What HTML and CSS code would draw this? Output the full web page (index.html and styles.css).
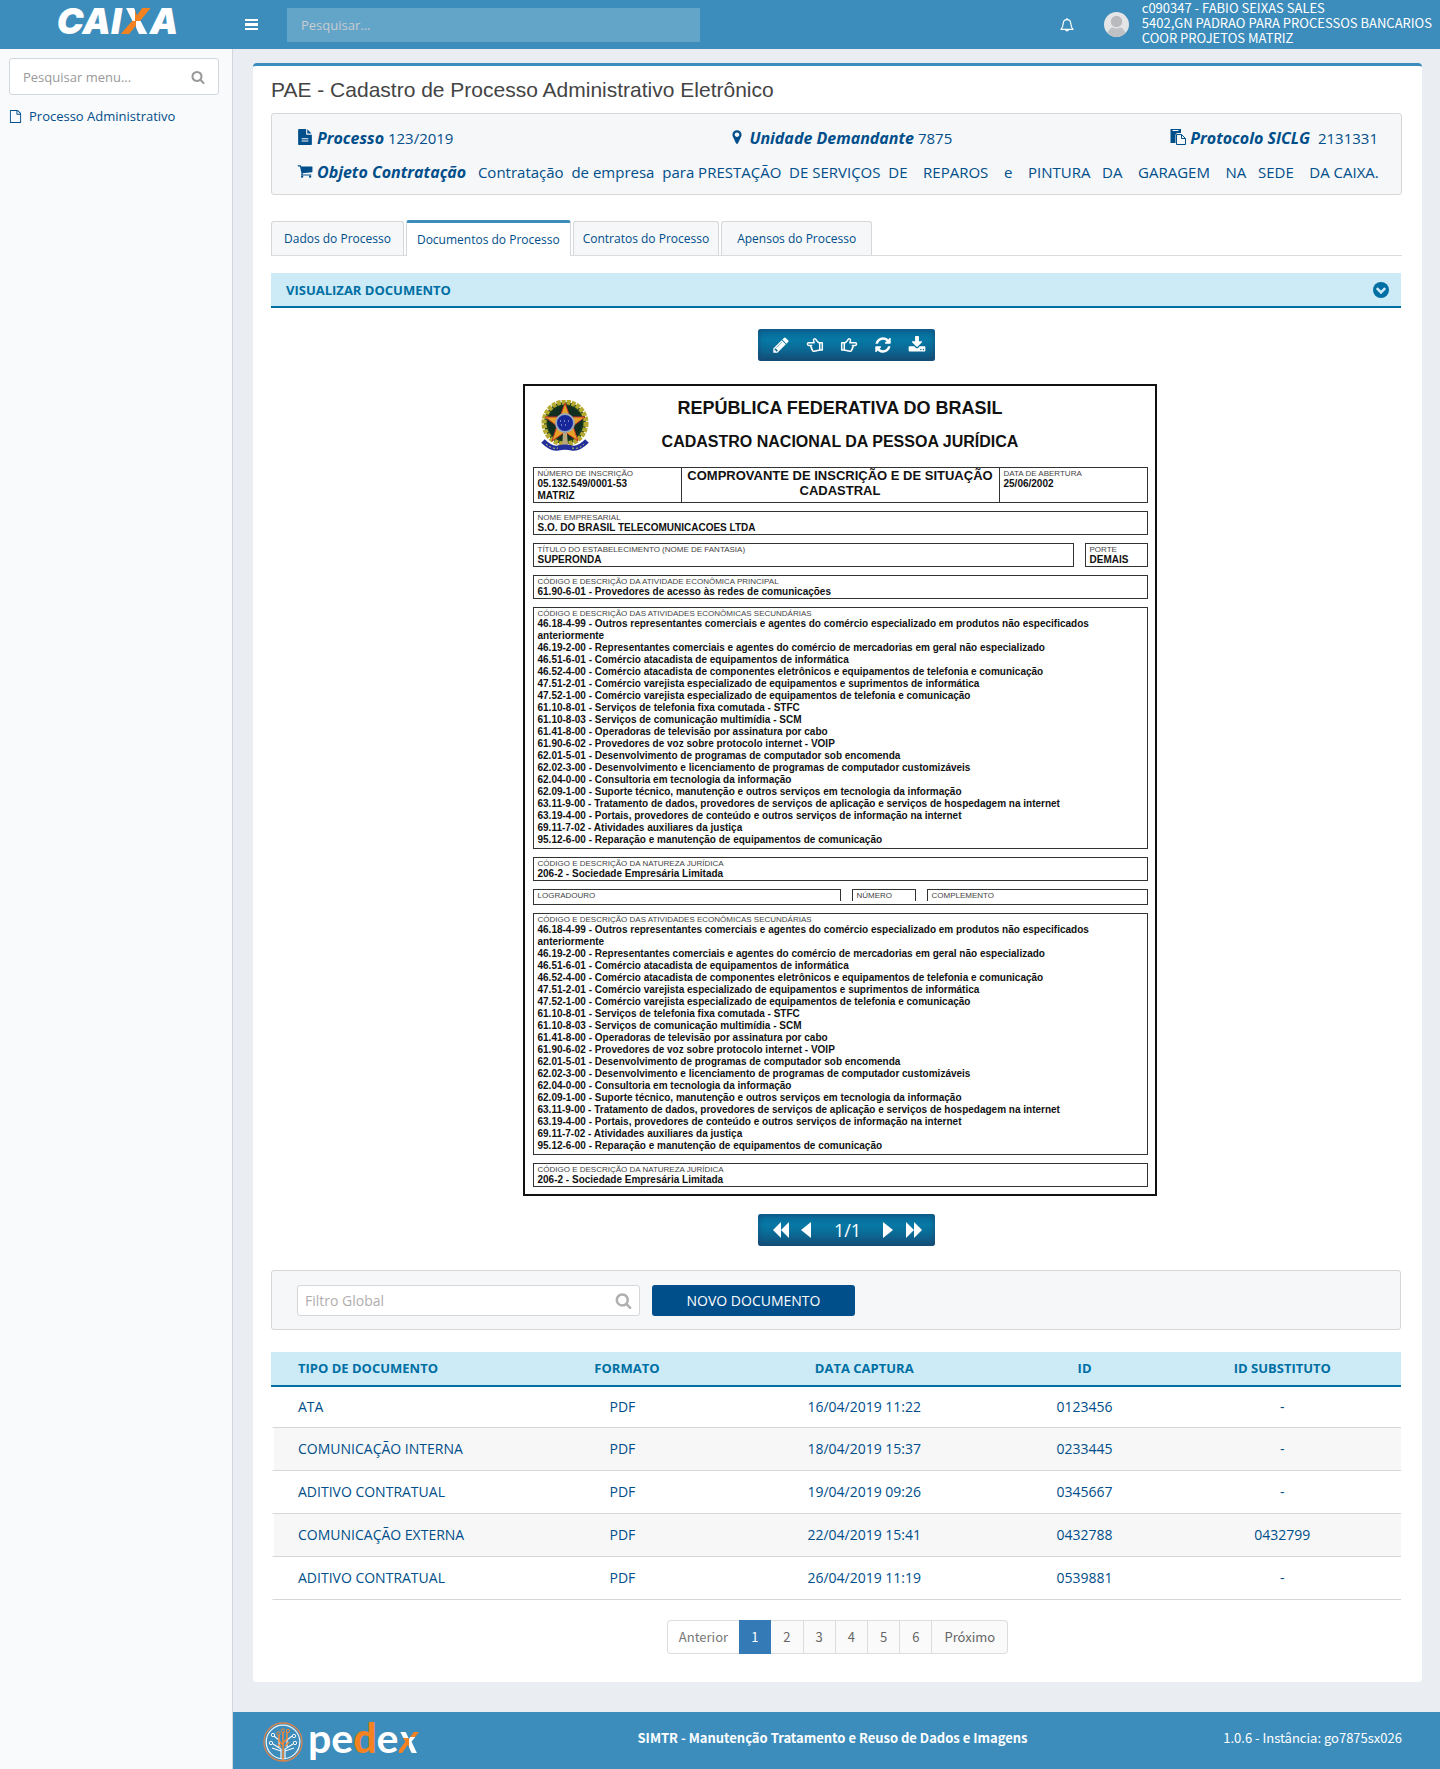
FILE: index.html
```html
<!DOCTYPE html>
<html lang="pt-BR">
<head>
<meta charset="utf-8">
<meta name="viewport" content="width=device-width, initial-scale=1">
<title>PAE - Cadastro de Processo Administrativo Eletrônico</title>
<link rel="stylesheet" href="styles.css">
</head>
<body>
<svg class="sprite" aria-hidden="true">
  <symbol id="search" viewBox="0 0 1792 1792"><path d="M1216 832q0-185-131.500-316.500t-316.500-131.500-316.500 131.500-131.500 316.500 131.500 316.500 316.500 131.500 316.500-131.500 131.500-316.500zm512 832q0 52-38 90t-90 38q-54 0-90-38l-343-342q-179 124-399 124-143 0-273.500-55.500t-225-150-150-225-55.500-273.500 55.500-273.500 150-225 225-150 273.500-55.500 273.500 55.500 225 150 150 225 55.500 273.500q0 220-124 399l343 343q37 37 37 90z"/></symbol>
  <symbol id="file" viewBox="0 0 1792 1792"><path d="M1596 380q28 28 48 76t20 88v1152q0 40-28 68t-68 28h-1344q-40 0-68-28t-28-68v-1600q0-40 28-68t68-28h896q40 0 88 20t76 48zm-444-244v376h376q-10-29-22-41l-313-313q-12-12-41-22zm384 1528v-1024h-416q-40 0-68-28t-28-68v-416h-768v1536h1280z"/></symbol>
  <symbol id="file-text" viewBox="0 0 1792 1792"><path d="M1596 476q14 14 28 36h-472v-472q22 14 36 28zm-476 164h544v1056q0 40-28 68t-68 28h-1344q-40 0-68-28t-28-68v-1600q0-40 28-68t68-28h800v544q0 40 28 68t68 28zm160 736v-64q0-32-32-32h-704q-32 0-32 32v64q0 32 32 32h704q32 0 32-32zm0-256v-64q0-32-32-32h-704q-32 0-32 32v64q0 32 32 32h704q32 0 32-32z"/></symbol>
  <symbol id="marker" viewBox="0 0 1792 1792"><path d="M1152 640q0-106-75-181t-181-75-181 75-75 181 75 181 181 75 181-75 75-181zm256 0q0 109-33 179l-364 774q-16 33-47.500 52t-67.500 19-67.500-19-46.500-52l-365-774q-33-70-33-179 0-212 150-362t362-150 362 150 150 362z"/></symbol>
  <symbol id="cart" viewBox="0 0 1792 1792"><path d="M704 1536q0 52-38 90t-90 38-90-38-38-90 38-90 90-38 90 38 38 90zm896 0q0 52-38 90t-90 38-90-38-38-90 38-90 90-38 90 38 38 90zm128-1088v512q0 24-16.500 42.500t-40.500 21.500l-1044 122q13 60 13 70 0 16-24 64h920q26 0 45 19t19 45-19 45-45 19h-1024q-26 0-45-19t-19-45q0-11 8-31.500t16-36 21.500-40 15.500-29.500l-177-823h-204q-26 0-45-19t-19-45 19-45 45-19h256q16 0 28.500 6.500t19.500 15.500 13 24.500 8 26 5.500 29.500 4.500 26h1201q26 0 45 19t19 45z"/></symbol>
  <symbol id="paste" viewBox="0 0 16 16"><path fill-rule="evenodd" d="M.5 0h10.500v4H7.500C6.500 4 5.500 5 5.500 6v8h-5zM2.500 1v1h6V1z"/><path fill="none" stroke="currentColor" d="M6.500 5.500h5l4 4v6h-9zM11.500 5.500v4h4"/></symbol>
  <symbol id="pencil" viewBox="0 0 1792 1792"><path d="M491 1536l91-91-235-235-91 91v107h128v128h107zm523-928q0-22-22-22-10 0-17 7l-542 542q-7 7-7 17 0 22 22 22 10 0 17-7l542-542q7-7 7-17zm-54-192l416 416-832 832h-416v-416zm683 96q0 53-37 90l-166 166-416-416 166-165q36-38 90-38 53 0 91 38l235 234q37 39 37 91z"/></symbol>
  <symbol id="hand" viewBox="-1 -1 18 18"><path fill="none" stroke="currentColor" stroke-width="1.500" stroke-linejoin="round" d="M.7 5.700h2.600v7.200H.7zM3.300 5.900C5.600 5.600 6.100 3.800 7.400 2.100c1.200-.8 2.200.1 2.100 1.300L8.900 5.700h5.400c1.700 0 1.700 2.700 0 2.700h-2.900c1.100.5 1 2-.1 2.300.5.800.2 1.700-.7 1.900.2 1-.3 1.600-1.300 1.600C7 14.200 5.800 13.500 3.300 12.900"/></symbol>
  <symbol id="refresh" viewBox="0 0 1792 1792"><path d="M1639 1056q0 5-1 7-64 268-268 434.500t-478 166.500q-146 0-282.500-55t-243.500-157l-129 129q-19 19-45 19t-45-19-19-45v-448q0-26 19-45t45-19h448q26 0 45 19t19 45-19 45l-137 137q71 66 161 102t187 36q134 0 250-65t186-179q11-17 53-117 8-23 30-23h192q13 0 22.500 9.500t9.500 22.500zm25-800v448q0 26-19 45t-45 19h-448q-26 0-45-19t-19-45 19-45l138-138q-148-137-349-137-134 0-250 65t-186 179q-11 17-53 117-8 23-30 23h-199q-13 0-22.500-9.500t-9.500-22.500v-7q65-268 270-434.500t480-166.500q146 0 284 55.500t245 156.500l130-129q19-19 45-19t45 19 19 45z"/></symbol>
  <symbol id="download" viewBox="0 0 1792 1792"><path d="M1344 1344q0-26-19-45t-45-19-45 19-19 45 19 45 45 19 45-19 19-45zm256 0q0-26-19-45t-45-19-45 19-19 45 19 45 45 19 45-19 19-45zm128-224v320q0 40-28 68t-68 28h-1472q-40 0-68-28t-28-68v-320q0-40 28-68t68-28h465l135 136q58 56 136 56t136-56l136-136h464q40 0 68 28t28 68zm-325-569q17 41-14 70l-448 448q-18 19-45 19t-45-19l-448-448q-31-29-14-70 17-39 59-39h256v-448q0-26 19-45t45-19h256q26 0 45 19t19 45v448h256q42 0 59 39z"/></symbol>
  <symbol id="single" viewBox="0 0 16 16"><path d="M3 0v16l10-8z"/></symbol>
  <symbol id="double" viewBox="0 0 16 16"><path d="M0 0v16l8-8v8l8-8-8-8v8z"/></symbol>
</svg>

<header class="topbar">
  <a class="brand" href="#" aria-label="CAIXA">CAI<span class="two-tone">X</span>A</a>
  <button class="icon-button menu" type="button" aria-label="Menu"><svg viewBox="0 0 13 11"><path d="M0 0h13v2H0zM0 4h13v3H0zM0 9h13v2H0z"/></svg></button>
  <input class="top-search" type="search" placeholder="Pesquisar..." aria-label="Pesquisar">
  <button class="icon-button bell" type="button" aria-label="Notificações"><svg viewBox="0 0 14 14"><path fill="none" stroke="currentColor" stroke-width="1.200" stroke-linejoin="round" d="M1 11.300c1.800-1.500 2-3.100 2.200-5.800C3.400 3.200 5 1.700 7 1.700s3.600 1.500 3.800 3.800c.2 2.700.4 4.300 2.200 5.800z"/><path d="M6.400 0h1.200v2H6.400zM5 11.500h4a2 2 0 0 1-4 0z"/></svg></button>
  <svg class="avatar" viewBox="0 0 25 25"><defs><clipPath id="face"><circle cx="12.500" cy="12.500" r="12.500"/></clipPath></defs><g clip-path="url(#face)"><path fill="#e4e5e7" d="M0 0h25v25H0z"/><circle cx="12.500" cy="9.500" r="5.700" fill="#b9babd"/><path fill="#c0c1c4" d="M3 25c0-5 3-9.500 6-9.500 2 1.300 5 1.300 7 0 3 0 6 4.500 6 9.500z"/></g></svg>
  <p class="user">c090347 - FABIO SEIXAS SALES<br>5402,GN PADRAO PARA PROCESSOS BANCARIOS<br>COOR PROJETOS MATRIZ</p>
</header>

<div class="shell">
  <aside class="sidebar">
    <div class="menu-search">
      <input type="search" placeholder="Pesquisar menu..." aria-label="Pesquisar menu">
      <svg class="icon"><use href="#search"/></svg>
    </div>
    <nav><a class="menu-link" href="#"><svg class="icon"><use href="#file"/></svg>Processo Administrativo</a></nav>
  </aside>

  <div class="page">
    <main class="card">
      <h1>PAE - Cadastro de Processo Administrativo Eletrônico</h1>

      <section class="panel summary">
        <div class="facts">
          <p><svg class="icon"><use href="#file-text"/></svg><strong>Processo</strong> 123/2019</p>
          <p><svg class="icon"><use href="#marker"/></svg><strong>Unidade Demandante</strong> 7875</p>
          <p><svg class="icon"><use href="#paste"/></svg><strong>Protocolo SICLG</strong>  2131331</p>
        </div>
        <p><svg class="icon"><use href="#cart"/></svg><strong>Objeto Contratação</strong>   Contratação  de empresa  para PRESTAÇÃO  DE SERVIÇOS  DE    REPAROS    e    PINTURA   DA    GARAGEM    NA   SEDE    DA CAIXA.</p>
      </section>

      <nav class="tabs">
        <a href="#">Dados do Processo</a>
        <a class="active" href="#" aria-current="page">Documentos do Processo</a>
        <a class="snug" href="#">Contratos do Processo</a>
        <a class="wide" href="#">Apensos do Processo</a>
      </nav>

      <h2 class="section-bar">VISUALIZAR DOCUMENTO
        <button class="icon-button collapse" type="button" aria-label="Recolher"><svg viewBox="0 0 16 16"><circle cx="8" cy="8" r="8"/><path fill="none" stroke="#cdebf7" stroke-width="2.600" d="M3.800 6.200L8 10.400l4.200-4.200"/></svg></button>
      </h2>

      <section class="viewer">
        <div class="toolbar">
          <button type="button" aria-label="Editar"><svg><use href="#pencil"/></svg></button>
          <button type="button" aria-label="Documento anterior"><svg class="flip"><use href="#hand"/></svg></button>
          <button type="button" aria-label="Próximo documento"><svg><use href="#hand"/></svg></button>
          <button type="button" aria-label="Atualizar"><svg><use href="#refresh"/></svg></button>
          <button type="button" aria-label="Baixar"><svg><use href="#download"/></svg></button>
        </div>

        <article class="document">
          <header class="doc-head">
            <svg class="arms" viewBox="0 0 48 54">
              <circle cx="24" cy="23" r="21" fill="#173b1d" stroke="#b5a92f" stroke-width="5" stroke-dasharray="4 1"/>
              <circle cx="24" cy="23" r="17" fill="#102d20"/>
              <path fill="#e7a126" stroke="#c3362b" d="M24 3l5 14 15 0-12 9 5 15-13-9-13 9 5-15L4 17h15z"/>
              <circle cx="24" cy="23" r="9" fill="#17279a" stroke="#9aa7b8" stroke-width="2"/>
              <path stroke="#d7dce8" stroke-dasharray="1 3" d="M19 21h11M20 25h8"/>
              <path fill="#b9a77c" d="M22 33h4l1 13h-6z"/>
              <path fill="none" stroke="#23309c" stroke-width="5" d="M2 41c5 5 10 8 15 7 4-1 10-1 14 0 5 1 10-2 15-7"/>
              <path fill="none" stroke="#c8c46a" stroke-dasharray="2 2" d="M5 44c5 4 8 5 12 4m14 0c5 1 8 0 12-4"/>
            </svg>
            <div><h3>REPÚBLICA FEDERATIVA DO BRASIL</h3><h4>CADASTRO NACIONAL DA PESSOA JURÍDICA</h4></div>
          </header>
          <div class="box registry">
            <p><small>NÚMERO DE INSCRIÇÃO</small>05.132.549/0001-53<br>MATRIZ</p>
            <p class="proof">COMPROVANTE DE INSCRIÇÃO E DE SITUAÇÃO CADASTRAL</p>
            <p><small>DATA DE ABERTURA</small>25/06/2002</p>
          </div>
          <p class="box"><small>NOME EMPRESARIAL</small>S.O. DO BRASIL TELECOMUNICACOES LTDA</p>
          <div class="pair">
            <p class="box"><small>TÍTULO DO ESTABELECIMENTO (NOME DE FANTASIA)</small>SUPERONDA</p>
            <p class="box"><small>PORTE</small>DEMAIS</p>
          </div>
          <p class="box"><small>CÓDIGO E DESCRIÇÃO DA ATIVIDADE ECONÔMICA PRINCIPAL</small>61.90-6-01 - Provedores de acesso às redes de comunicações</p>
          <div class="box activities">
            <small>CÓDIGO E DESCRIÇÃO DAS ATIVIDADES ECONÔMICAS SECUNDÁRIAS</small>
            <ul>
              <li>46.18-4-99 - Outros representantes comerciais e agentes do comércio especializado em produtos não especificados<br>anteriormente</li>
              <li>46.19-2-00 - Representantes comerciais e agentes do comércio de mercadorias em geral não especializado</li>
              <li>46.51-6-01 - Comércio atacadista de equipamentos de informática</li>
              <li>46.52-4-00 - Comércio atacadista de componentes eletrônicos e equipamentos de telefonia e comunicação</li>
              <li>47.51-2-01 - Comércio varejista especializado de equipamentos e suprimentos de informática</li>
              <li>47.52-1-00 - Comércio varejista especializado de equipamentos de telefonia e comunicação</li>
              <li>61.10-8-01 - Serviços de telefonia fixa comutada - STFC</li>
              <li>61.10-8-03 - Serviços de comunicação multimídia - SCM</li>
              <li>61.41-8-00 - Operadoras de televisão por assinatura por cabo</li>
              <li>61.90-6-02 - Provedores de voz sobre protocolo internet - VOIP</li>
              <li>62.01-5-01 - Desenvolvimento de programas de computador sob encomenda</li>
              <li>62.02-3-00 - Desenvolvimento e licenciamento de programas de computador customizáveis</li>
              <li>62.04-0-00 - Consultoria em tecnologia da informação</li>
              <li>62.09-1-00 - Suporte técnico, manutenção e outros serviços em tecnologia da informação</li>
              <li>63.11-9-00 - Tratamento de dados, provedores de serviços de aplicação e serviços de hospedagem na internet</li>
              <li>63.19-4-00 - Portais, provedores de conteúdo e outros serviços de informação na internet</li>
              <li>69.11-7-02 - Atividades auxiliares da justiça</li>
              <li>95.12-6-00 - Reparação e manutenção de equipamentos de comunicação</li>
            </ul>
          </div>
          <p class="box"><small>CÓDIGO E DESCRIÇÃO DA NATUREZA JURÍDICA</small>206-2 - Sociedade Empresária Limitada</p>
          <div class="address"><small>LOGRADOURO</small><small>NÚMERO</small><small>COMPLEMENTO</small></div>
          <div class="box activities">
            <small>CÓDIGO E DESCRIÇÃO DAS ATIVIDADES ECONÔMICAS SECUNDÁRIAS</small>
            <ul>
              <li>46.18-4-99 - Outros representantes comerciais e agentes do comércio especializado em produtos não especificados<br>anteriormente</li>
              <li>46.19-2-00 - Representantes comerciais e agentes do comércio de mercadorias em geral não especializado</li>
              <li>46.51-6-01 - Comércio atacadista de equipamentos de informática</li>
              <li>46.52-4-00 - Comércio atacadista de componentes eletrônicos e equipamentos de telefonia e comunicação</li>
              <li>47.51-2-01 - Comércio varejista especializado de equipamentos e suprimentos de informática</li>
              <li>47.52-1-00 - Comércio varejista especializado de equipamentos de telefonia e comunicação</li>
              <li>61.10-8-01 - Serviços de telefonia fixa comutada - STFC</li>
              <li>61.10-8-03 - Serviços de comunicação multimídia - SCM</li>
              <li>61.41-8-00 - Operadoras de televisão por assinatura por cabo</li>
              <li>61.90-6-02 - Provedores de voz sobre protocolo internet - VOIP</li>
              <li>62.01-5-01 - Desenvolvimento de programas de computador sob encomenda</li>
              <li>62.02-3-00 - Desenvolvimento e licenciamento de programas de computador customizáveis</li>
              <li>62.04-0-00 - Consultoria em tecnologia da informação</li>
              <li>62.09-1-00 - Suporte técnico, manutenção e outros serviços em tecnologia da informação</li>
              <li>63.11-9-00 - Tratamento de dados, provedores de serviços de aplicação e serviços de hospedagem na internet</li>
              <li>63.19-4-00 - Portais, provedores de conteúdo e outros serviços de informação na internet</li>
              <li>69.11-7-02 - Atividades auxiliares da justiça</li>
              <li>95.12-6-00 - Reparação e manutenção de equipamentos de comunicação</li>
            </ul>
          </div>
          <p class="box"><small>CÓDIGO E DESCRIÇÃO DA NATUREZA JURÍDICA</small>206-2 - Sociedade Empresária Limitada</p>
        </article>

        <div class="toolbar pager">
          <button type="button" aria-label="Primeira página"><svg class="flip"><use href="#double"/></svg></button>
          <button type="button" aria-label="Página anterior"><svg class="flip"><use href="#single"/></svg></button>
          <span>1/1</span>
          <button type="button" aria-label="Próxima página"><svg><use href="#single"/></svg></button>
          <button type="button" aria-label="Última página"><svg><use href="#double"/></svg></button>
        </div>
      </section>

      <section class="panel filter">
        <div class="filter-box">
          <input type="search" placeholder="Filtro Global" aria-label="Filtro Global">
          <svg class="icon"><use href="#search"/></svg>
        </div>
        <button class="primary" type="button">NOVO DOCUMENTO</button>
      </section>

      <table>
        <colgroup><col class="c-type"><col class="c-format"><col class="c-date"><col class="c-id"><col></colgroup>
        <thead><tr><th>TIPO DE DOCUMENTO</th><th>FORMATO</th><th>DATA CAPTURA</th><th>ID</th><th>ID SUBSTITUTO</th></tr></thead>
        <tbody>
          <tr><td>ATA</td><td>PDF</td><td>16/04/2019 11:22</td><td>0123456</td><td>-</td></tr>
          <tr><td>COMUNICAÇÃO INTERNA</td><td>PDF</td><td>18/04/2019 15:37</td><td>0233445</td><td>-</td></tr>
          <tr><td>ADITIVO CONTRATUAL</td><td>PDF</td><td>19/04/2019 09:26</td><td>0345667</td><td>-</td></tr>
          <tr><td>COMUNICAÇÃO EXTERNA</td><td>PDF</td><td>22/04/2019 15:41</td><td>0432788</td><td>0432799</td></tr>
          <tr><td>ADITIVO CONTRATUAL</td><td>PDF</td><td>26/04/2019 11:19</td><td>0539881</td><td>-</td></tr>
        </tbody>
      </table>

      <nav class="pagination" aria-label="Paginação">
        <a class="prev" href="#">Anterior</a><a class="current" href="#" aria-current="page">1</a><a href="#">2</a><a href="#">3</a><a href="#">4</a><a href="#">5</a><a href="#">6</a><a href="#">Próximo</a>
      </nav>
    </main>

    <footer class="footer">
      <a class="pedex" href="#" aria-label="pedex">
        <svg viewBox="0 0 40 40">
          <circle cx="20" cy="20" r="19" stroke="#d9824a" stroke-width="1.300"/>
          <circle cx="20" cy="20" r="16.800" stroke="#e8f2f8" stroke-width="1.300"/>
          <path stroke="#f3f8fb" stroke-width="1.200" d="M18 36V27l-8-5M16 25v-7l-5-4M18 29l-9-3M22 36V27l8-5M24 25v-7l5-4M22 29l9-3"/>
          <path stroke="#f58634" stroke-width="1.500" d="M20 39V10M20 23l-4-4v-6M20 21l4-4v-7M18 25l-3-3M22 24l4-4"/>
          <g stroke="#f3f8fb"><circle cx="8" cy="21" r="1.700"/><circle cx="10" cy="13" r="1.700"/><circle cx="32" cy="21" r="1.700"/><circle cx="31" cy="14" r="1.700"/></g>
          <g stroke="#f58634"><circle cx="20" cy="8.500" r="1.700"/><circle cx="15.500" cy="11.500" r="1.700"/><circle cx="25" cy="9" r="1.700"/></g>
        </svg>
        <span>pe<b>d</b>e<i class="two-tone">x</i></span>
      </a>
      <strong>SIMTR - Manutenção Tratamento e Reuso de Dados e Imagens</strong>
      <span class="version">1.0.6 - Instância: go7875sx026</span>
    </footer>
  </div>
</div>
</body>
</html>
```
FILE: styles.css
```css
:root {
  --blue: #3c8dbc;
  --navy: #004e8a;
  --teal: #006fa3;
  --pale: #cdebf7;
  --line: #d5d7d9;
  --ui: "Open Sans", "Noto Sans", sans-serif;
  --source: "Noto Sans CJK SC", "Noto Sans", sans-serif;
}

* { box-sizing: border-box; }

body {
  margin: 0;
  min-height: 100vh;
  display: flex;
  flex-direction: column;
  background: #eaeef3;
  color: var(--navy);
  font: 14px/20px var(--ui);
}

h1, h2, h3, h4, p, ul { margin: 0; padding: 0; }
ul { list-style: none; }
a { color: inherit; text-decoration: none; }
svg { display: block; fill: currentColor; }
button, input { font: inherit; color: inherit; border: 0; padding: 0; background: none; }
input { min-width: 0; outline: 0; appearance: none; }
input::placeholder { color: #999; opacity: 1; }
.sprite { position: absolute; width: 0; height: 0; }
.icon { width: 14px; height: 14px; flex: none; }
.flip { transform: scaleX(-1); }

.two-tone {
  color: transparent;
  background: conic-gradient(#f58220 25%, #fff 0 50%, #f58220 0 75%, #fff 0);
  -webkit-background-clip: text;
  background-clip: text;
}

/* Top bar */
.topbar {
  display: flex;
  align-items: center;
  height: 49px;
  padding-right: 8px;
  background: var(--blue);
  color: #fff;
}
.brand {
  width: 235px;
  height: 49px;
  font: italic 900 36px/43px Inter, sans-serif;
  text-align: center;
}
.icon-button svg { width: 100%; height: 100%; }
.menu { width: 13px; height: 11px; margin: 0 29px 0 10px; }
.top-search {
  width: 413px;
  height: 34px;
  padding: 0 14px;
  background: #63a4c9;
  font-size: 13px;
}
.top-search::placeholder { color: #c9cdd0; }
.bell { width: 14px; height: 14px; margin-left: auto; }
.avatar { width: 25px; height: 25px; margin: 0 13px 0 30px; }
.user { padding-bottom: 4px; font: 13px/15px var(--source); }

.shell { flex: 1; display: flex; }

/* Sidebar */
.sidebar {
  width: 233px;
  flex: none;
  padding: 9px 13px 0 9px;
  background: #f9fafc;
  border-right: 1px solid #d2d6de;
  font-size: 13px;
}
.menu-search {
  display: flex;
  align-items: center;
  height: 37px;
  padding: 0 13px;
  border: 1px solid #d2d6de;
  border-radius: 3px;
  background: #fff;
  color: #999;
}
.menu-search input { flex: 1; }
.menu-link { display: flex; align-items: center; gap: 7px; padding-top: 11px; }
.menu-link .icon { width: 13px; height: 13px; }

/* Main card */
.page { flex: 1; min-width: 0; display: flex; flex-direction: column; }
.card {
  margin: 14px 18px 30px 20px;
  padding: 0 20px 28px 18px;
  border-top: 3px solid var(--blue);
  border-radius: 4px;
  background: #fff;
}
h1 { color: #444; font: 21px/47px "Liberation Sans", sans-serif; }

.panel { border: 1px solid var(--line); border-radius: 3px; background: #f5f7f9; }
.summary { padding: 7px 23px 5px 25px; font-size: 15px; line-height: 34px; }
.summary p { display: flex; align-items: center; white-space: pre; }
.summary .icon { width: 16px; height: 16px; margin: 0 4px 3px 0; }
.summary strong { font-size: 16px; font-style: italic; }
.facts { display: grid; grid-template-columns: 40% 1fr auto; }

.tabs {
  display: flex;
  align-items: flex-end;
  gap: 2px;
  margin-top: 25px;
  border-bottom: 1px solid #dcdcdc;
  font-size: 12px;
  line-height: 33px;
}
.tabs a {
  padding: 0 12px;
  border: 1px solid var(--line);
  border-bottom: 0;
  border-radius: 3px 3px 0 0;
  background: #f5f7f9;
}
.tabs .active { margin-bottom: -1px; padding: 0 10px; border-top: 3px solid var(--blue); background: #fff; }
.tabs .snug { padding: 0 9px; }
.tabs .wide { padding: 0 15px; }

.section-bar, .filter { margin-right: 1px; }
.section-bar {
  display: flex;
  align-items: center;
  justify-content: space-between;
  height: 35px;
  margin-top: 17px;
  padding: 0 12px 0 15px;
  border-bottom: 2px solid var(--teal);
  background: var(--pale);
  color: var(--teal);
  font-size: 13px;
}
.collapse { width: 16px; height: 16px; }

/* Document viewer */
.viewer {
  display: flex;
  flex-direction: column;
  align-items: center;
  padding: 21px 0 24px 6px;
}
.toolbar {
  display: grid;
  grid-template-columns: repeat(5, 34px);
  justify-content: center;
  align-items: center;
  width: 177px;
  height: 32px;
  margin-left: 14px;
  padding-left: 4px;
  border-radius: 3px;
  background: linear-gradient(#07699a, #0779a5 35%, #0a6b97 60%, #144e76);
  box-shadow: inset 0 0 6px #174a76;
  color: #fff;
}
.toolbar button { display: flex; justify-content: center; }
.toolbar svg { width: 18px; height: 18px; }
.pager { grid-template-columns: 26px 24px 60px 20px 32px; font-size: 18px; text-align: center; }
.pager svg { width: 16px; height: 16px; }

.document {
  display: flex;
  flex-direction: column;
  gap: 8px;
  width: 634px;
  margin: 23px 0 18px;
  padding: 0 7px 7px 8px;
  border: 2px solid #111;
  color: #111;
  font: bold 10px/12px "Liberation Sans", sans-serif;
}
.doc-head {
  display: grid;
  grid-template-columns: 65px 1fr 65px;
  margin-bottom: -8px;
  padding: 5px 0 8px;
  text-align: center;
}
.doc-head h3 { font-size: 18px; line-height: 34px; }
.doc-head h4 { font-size: 16px; line-height: 34px; }
.arms { width: 48px; height: 54px; margin: 9px 0 0 8px; }
.document small { display: block; color: #444; font-size: 8px; font-weight: normal; line-height: 9px; }
.box { border: 1px solid #333; padding: 1px 4px 0; }
.registry { display: grid; grid-template-columns: 147px 319px 1fr; padding: 0; }
.registry p { padding: 1px 4px 0; }
.registry .proof {
  padding: 0 0 4px;
  border: solid #333;
  border-width: 0 1px;
  font-size: 13px;
  line-height: 15px;
  text-align: center;
}
.pair { display: grid; grid-template-columns: 1fr 63px; gap: 11px; }
.activities { padding-bottom: 2px; }
.address {
  display: grid;
  grid-template-columns: 307px 64px 1fr;
  gap: 11px;
  height: 16px;
  padding-bottom: 3px;
  border: solid #333;
  border-width: 0 1px 1px;
}
.document .address small { padding: 1px 4px 0; border: solid #333; border-width: 1px 1px 0; }
.document .address small:first-child { border-left: 0; }
.document .address small:last-child { border-right: 0; }

/* Filter and table */
.filter { display: flex; gap: 12px; padding: 14px 25px 13px; }
.filter-box {
  display: flex;
  align-items: center;
  width: 343px;
  height: 31px;
  padding: 0 7px;
  border: 1px solid var(--line);
  border-radius: 3px;
  background: #fff;
  color: #b0aeae;
}
.filter-box input { flex: 1; }
.filter-box input::placeholder { color: #b0aeae; }
.filter-box .icon { width: 17px; height: 17px; }
.primary { width: 203px; border-radius: 3px; background: var(--navy); color: #fff; }

table { width: calc(100% - 1px); margin-top: 22px; table-layout: fixed; border-spacing: 0; }
.c-type { width: 23%; }
.c-format { width: 17%; }
.c-date { width: 25%; }
.c-id { width: 14%; }
th { height: 35px; padding: 0 0 1px; border-bottom: 2px solid var(--teal); background: var(--pale); color: var(--teal); font-size: 13px; }
th:first-child, td:first-child { text-align: left; padding-left: 27px; }
td { height: 43px; padding: 0; border-bottom: 1px solid var(--line); text-align: center; }
td:first-child { border-left: 3px solid #fff; padding-left: 24px; }
td:nth-child(2) { padding-right: 9px; }
tbody tr:first-child td { height: 41px; }
tbody tr:nth-child(even) td { background: #f7f7f7; }

.pagination { display: flex; justify-content: center; margin-top: 20px; padding-left: 2px; font: 13px/32px var(--source); }
.pagination a {
  padding: 0 12px;
  border: 1px solid #ddd;
  border-left: 0;
  background: #fafafa;
  color: #666;
}
.pagination .prev { padding: 0 11px; border-left: 1px solid #ddd; border-right: 0; border-radius: 4px 0 0 4px; background: #fff; color: #777; }
.pagination a:last-child { border-radius: 0 4px 4px 0; }
.pagination .current { border-color: #337ab7; background: #337ab7; color: #fff; }

/* Footer */
.footer {
  display: grid;
  grid-template-columns: 1fr auto 1fr;
  align-items: center;
  height: 57px;
  margin-top: auto;
  padding: 0 38px 6px 30px;
  background: var(--blue);
  color: #fff;
  font: 13px/20px var(--source);
}
.pedex { display: flex; align-items: center; gap: 5px; height: 51px; font: 700 41px/51px Lato, sans-serif; }
.pedex svg { width: 40px; height: 40px; margin-top: 8px; fill: none; }
.pedex b { color: #f58220; }
.version { justify-self: end; }
```
